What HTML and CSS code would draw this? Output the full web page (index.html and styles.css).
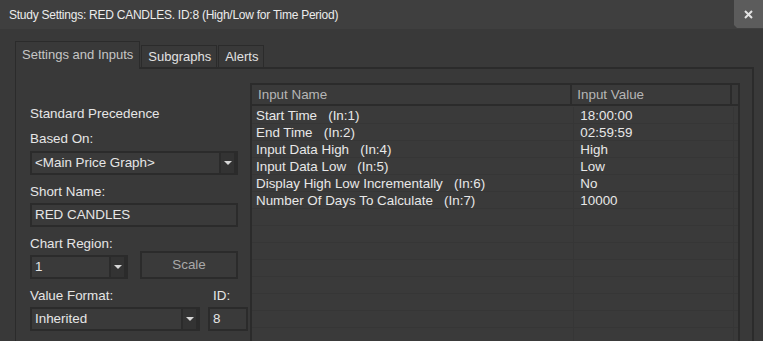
FILE: index.html
```html
<!DOCTYPE html>
<html>
<head>
<meta charset="utf-8">
<link rel="stylesheet" href="styles.css">
</head>
<body>
<div class="window">
  <div class="titlebar">
    <span class="title">Study Settings: RED CANDLES. ID:8 (High/Low for Time Period)</span>
    <div class="close"><svg width="9" height="9" viewBox="0 0 9 9"><path d="M1 1 L8 8 M8 1 L1 8" stroke="#e4e4e4" stroke-width="2"/></svg></div>
  </div>
  <div class="body">
    <div class="tabs">
      <div class="tab active">Settings and Inputs</div>
      <div class="tab">Subgraphs</div>
      <div class="tab">Alerts</div>
    </div>
    <div class="panel">
      <div class="left">
        <div class="label first">Standard Precedence</div>
        <div class="label">Based On:</div>
        <div class="combo wide"><span class="field">&lt;Main Price Graph&gt;</span><span class="drop"><i class="arrow"></i></span></div>
        <div class="label">Short Name:</div>
        <div class="textbox">RED CANDLES</div>
        <div class="label">Chart Region:</div>
        <div class="row region">
          <div class="combo small"><span class="field">1</span><span class="drop"><i class="arrow"></i></span></div>
          <div class="button">Scale</div>
        </div>
        <div class="row labels">
          <div class="label">Value Format:</div>
          <div class="label id-label">ID:</div>
        </div>
        <div class="row format">
          <div class="combo medium"><span class="field">Inherited</span><span class="drop"><i class="arrow"></i></span></div>
          <div class="textbox idbox">8</div>
        </div>
      </div>
      <div class="grid">
        <div class="ghead">
          <div class="hcell c1">Input Name</div>
          <div class="hcell c2">Input Value</div>
          <div class="hcell c3"></div>
        </div>
        <div class="rows">
          <div class="grow"><div class="cell c1">Start Time&nbsp;&nbsp; (In:1)</div><div class="cell c2">18:00:00</div><div class="cell c3"></div></div>
          <div class="grow"><div class="cell c1">End Time&nbsp;&nbsp; (In:2)</div><div class="cell c2">02:59:59</div><div class="cell c3"></div></div>
          <div class="grow"><div class="cell c1">Input Data High&nbsp;&nbsp; (In:4)</div><div class="cell c2">High</div><div class="cell c3"></div></div>
          <div class="grow"><div class="cell c1">Input Data Low&nbsp;&nbsp; (In:5)</div><div class="cell c2">Low</div><div class="cell c3"></div></div>
          <div class="grow"><div class="cell c1">Display High Low Incrementally&nbsp;&nbsp; (In:6)</div><div class="cell c2">No</div><div class="cell c3"></div></div>
          <div class="grow"><div class="cell c1">Number Of Days To Calculate&nbsp;&nbsp; (In:7)</div><div class="cell c2">10000</div><div class="cell c3"></div></div>
          <div class="grow"><div class="cell c1"></div><div class="cell c2"></div><div class="cell c3"></div></div>
          <div class="grow"><div class="cell c1"></div><div class="cell c2"></div><div class="cell c3"></div></div>
          <div class="grow"><div class="cell c1"></div><div class="cell c2"></div><div class="cell c3"></div></div>
          <div class="grow"><div class="cell c1"></div><div class="cell c2"></div><div class="cell c3"></div></div>
          <div class="grow"><div class="cell c1"></div><div class="cell c2"></div><div class="cell c3"></div></div>
          <div class="grow"><div class="cell c1"></div><div class="cell c2"></div><div class="cell c3"></div></div>
          <div class="grow"><div class="cell c1"></div><div class="cell c2"></div><div class="cell c3"></div></div>
          <div class="grow"><div class="cell c1"></div><div class="cell c2"></div><div class="cell c3"></div></div>
        </div>
      </div>
    </div>
  </div>
</div>
</body>
</html>
```

FILE: styles.css
```css
html, body {
  margin: 0;
  padding: 0;
  background: #393939;
  overflow: hidden;
}
.window {
  width: 763px;
  height: 341px;
  overflow: hidden;
  font-family: "Liberation Sans", Arial, sans-serif;
  font-size: 13.4px;
  color: #e6e6e6;
  background: #393939;
}
.titlebar {
  height: 29px;
  background: #3f3f3f;
  display: flex;
  align-items: center;
  justify-content: space-between;
}
.title {
  padding-left: 9px;
  font-size: 12px;
  letter-spacing: -0.25px;
  color: #ececec;
}
.close {
  width: 29px;
  height: 28px;
  align-self: flex-start;
  background: #5c5c5c;
  display: flex;
  align-items: center;
  justify-content: center;
  clip-path: polygon(0 0, 100% 0, 100% 100%, 3px 100%, 0 calc(100% - 3px));
}
.body {
  padding: 15px 9px 0 15px;
}
.tabs {
  display: flex;
  align-items: flex-end;
  height: 23px;
  position: relative;
  z-index: 1;
  font-size: 13px;
}
.tab {
  height: 21px;
  border: 1px solid #2b2b2b;
  border-bottom: none;
  padding: 0 5px 0 6px;
  display: flex;
  align-items: center;
  color: #e2e2e2;
  background: #393939;
}
.tab + .tab {
  margin-left: 1px;
}
.tab.active {
  height: 25px;
  margin-bottom: -2px;
  padding: 0 6px 2px 6px;
  color: #c6c6c6;
}
.panel {
  border: 2px solid #2b2b2b;
  border-left-width: 1px;
  height: 300px;
  display: flex;
  padding: 14px 12px 0 14px;
  gap: 2px;
}
.left {
  width: 218px;
  display: flex;
  flex-direction: column;
  align-items: flex-start;
}
.label {
  line-height: 17px;
  height: 17px;
  margin-top: 8px;
  white-space: nowrap;
}
.label.first {
  margin-top: 22px;
}
.combo {
  display: flex;
  height: 24px;
  box-sizing: border-box;
  background: #2b2b2b;
  padding: 2px 4px 2px 2px;
  gap: 2px;
  margin-top: 4px;
}
.combo.wide { width: 208px; }
.combo.small { width: 98px; margin-top: 4px; }
.combo.medium { width: 170px; }
.field {
  flex: 1;
  background: #3a3a3a;
  line-height: 20px;
  padding-left: 3px;
  white-space: nowrap;
}
.drop {
  width: 13px;
  background: #333333;
  display: flex;
  align-items: center;
  justify-content: center;
}
.arrow {
  width: 0;
  height: 0;
  border-left: 4px solid transparent;
  border-right: 4px solid transparent;
  border-top: 4px solid #d6d6d6;
}
.textbox {
  box-sizing: border-box;
  width: 208px;
  height: 24px;
  border: 2px solid #2b2b2b;
  background: #3a3a3a;
  line-height: 20px;
  padding-left: 3px;
  margin-top: 3px;
}
.row {
  display: flex;
  width: 218px;
}
.row.region {
  height: 28px;
  gap: 12px;
  margin-top: -1px;
}
.button {
  box-sizing: border-box;
  width: 98px;
  height: 28px;
  border: 2px solid #2b2b2b;
  background: #3a3a3a;
  color: #a9a9a9;
  display: flex;
  align-items: center;
  justify-content: center;
  padding-bottom: 2px;
}
.row.labels {
  justify-content: space-between;
}
.id-label {
  width: 35px;
}
.row.format {
  gap: 8px;
  margin-top: 2px;
}
.row.format .combo {
  margin-top: 1px;
}
.textbox.idbox {
  width: 40px;
  height: 24px;
  margin-top: 1px;
}
.grid {
  width: 490px;
  box-sizing: border-box;
  border: 2px solid #2b2b2b;
  border-bottom: none;
  background: #3a3a3a;
}
.ghead {
  display: flex;
  height: 19px;
  border-bottom: 2px solid #2b2b2b;
  color: #b6b6b6;
}
.hcell {
  line-height: 20px;
  padding-left: 6px;
  box-sizing: border-box;
  border-right: 2px solid #2b2b2b;
  white-space: nowrap;
}
.c1 { width: 323px; }
.c2 { width: 160px; }
.c3 { flex: 1; border-right: none; }
.hcell.c1 { width: 323px; }
.hcell.c2 { width: 161px; padding-left: 5px; }
.rows {
  padding-top: 1px;
}
.grow {
  display: flex;
  height: 17px;
  border-bottom: 1px solid #363636;
  box-sizing: border-box;
}
.cell {
  line-height: 17px;
  padding-left: 4px;
  box-sizing: border-box;
  border-right: 1px solid #363636;
  white-space: nowrap;
  color: #e8e8e8;
}
.cell.c1 { width: 323px; }
.cell.c2 { width: 160px; padding-left: 6px; }
.cell.c3 { border-right: none; }
```
